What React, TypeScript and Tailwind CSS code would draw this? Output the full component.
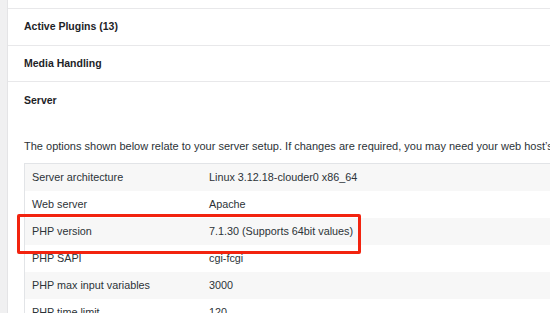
import React from "react";

const rows: [string, string][] = [
  ["Server architecture", "Linux 3.12.18-clouder0 x86_64"],
  ["Web server", "Apache"],
  ["PHP version", "7.1.30 (Supports 64bit values)"],
  ["PHP SAPI", "cgi-fcgi"],
  ["PHP max input variables", "3000"],
  ["PHP time limit", "120"],
];

export default function App() {
  return (
    <div
      className="relative w-[550px] h-[313px] overflow-hidden flex bg-white text-[#1d2327]"
      style={{ fontFamily: "'Liberation Sans', Arial, sans-serif" }}
    >
      <div className="w-[8px] shrink-0 bg-[#f0f0f1] border-r border-[#e4e4e6]" />
      <div className="flex-1 min-w-0 pt-[8px]">
        <div className="border-t border-[#e8e8ea] h-[37px] pl-[16px] flex items-center text-[10.5px] font-bold">
          Active Plugins (13)
        </div>
        <div className="border-t border-[#e8e8ea] h-[36px] pl-[16px] flex items-center text-[10.5px] font-bold">
          Media Handling
        </div>
        <div className="border-t border-[#e8e8ea] pl-[16px]">
          <div className="h-[38px] flex items-center text-[10.5px] font-bold">Server</div>
          <p className="mt-[16px] text-[11px] text-[#2c3338] whitespace-nowrap leading-[20px]">
            The options shown below relate to your server setup. If changes are required, you may need your web host’s assistance.
          </p>
          <div className="mt-[7px] border-t border-l border-[#e2e4e7]">
            {rows.map(([k, v], i) => (
              <div
                key={k}
                className={`h-[27px] flex items-center text-[10.8px] text-[#2c3338] whitespace-nowrap ${i % 2 === 0 ? "bg-[#f7f7f7]" : "bg-white"}`}
              >
                <div className="w-[184px] pl-[7px] shrink-0">{k}</div>
                <div>{v}</div>
              </div>
            ))}
          </div>
        </div>
      </div>
      <div className="absolute left-[17px] top-[214px] w-[344px] h-[40px] border-[3px] border-[#f2230f] rounded-[2px]" />
    </div>
  );
}
